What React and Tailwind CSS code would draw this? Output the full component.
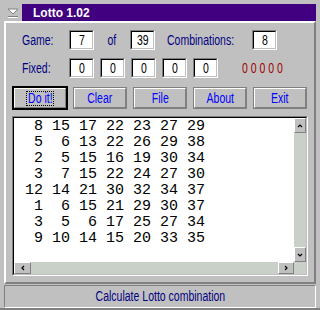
import React from "react";

const lines = [
  " 8 15 17 22 23 27 29",
  " 5  6 13 22 26 29 38",
  " 2  5 15 16 19 30 34",
  " 3  7 15 22 24 27 30",
  "12 14 21 30 32 34 37",
  " 1  6 15 21 29 30 37",
  " 3  5  6 17 25 27 34",
  " 9 10 14 15 20 33 35",
];

function T({ children, center }) {
  return (
    <span
      className={`inline-block whitespace-nowrap scale-x-75 ${center ? "origin-center" : "origin-left"}`}
    >
      {children}
    </span>
  );
}

function Field({ children }) {
  return (
    <div className="w-[25px] h-[20px] border border-t-[#808080] border-l-[#808080] border-b-white border-r-white">
      <div className="w-full h-full border border-t-black border-l-black border-b-[#c0c0c0] border-r-[#c0c0c0] bg-white flex items-center justify-center text-[14px] leading-none text-black">
        <T center>{children}</T>
      </div>
    </div>
  );
}

function Btn({ children }) {
  return (
    <div className="w-[54px] h-[22px] border border-[#808080]">
      <div className="w-full h-full border border-t-white border-l-white border-b-[#808080] border-r-[#808080] flex items-center justify-center text-[14px] leading-none text-[#0000ff]">
        <T center>{children}</T>
      </div>
    </div>
  );
}

function Chevron({ dir }) {
  const pts = {
    up: "1,4 3,2 5,4",
    down: "1,2 3,4 5,2",
    left: "4,1 2,3 4,5",
    right: "2,1 4,3 2,5",
  }[dir];
  return (
    <svg width="6" height="6" viewBox="0 0 6 6">
      <polyline points={pts} fill="none" stroke="#000" strokeWidth="1.2" />
    </svg>
  );
}

function SBtn({ dir, cls }) {
  return (
    <div className={`${cls} bg-[#c0c0c0] border border-t-white border-l-white border-b-[#808080] border-r-[#808080] flex items-center justify-center`}>
      <Chevron dir={dir} />
    </div>
  );
}

export default function App() {
  return (
    <div className="w-[320px] h-[310px] bg-[#c0c0c0] flex flex-col pt-[4px] font-['Liberation_Sans',sans-serif] border-b-2 border-[#808080]">
      {/* title bar */}
      <div className="h-[17px] flex ml-[4px] mr-[4px]">
        <div className="w-[18px] h-full flex items-center justify-center">
          <svg width="12" height="10" viewBox="0 0 12 10">
            <polygon points="1,1 11,1 6,6" fill="#ffffff" stroke="#808080" strokeWidth="1" />
            <line x1="1" y1="8.5" x2="11" y2="8.5" stroke="#808080" strokeWidth="1" />
            <line x1="1" y1="9.5" x2="11" y2="9.5" stroke="#ffffff" strokeWidth="1" />
          </svg>
        </div>
        <div className="flex-1 bg-[#400080] flex items-center pl-[11px] text-white font-bold text-[12px] leading-none">
          Lotto 1.02
        </div>
      </div>

      {/* body */}
      <div className="ml-[4px] w-[312px] h-[263px] border-2 border-t-white border-l-white border-b-[#808080] border-r-[#808080] flex flex-col">
        {/* row 1 */}
        <div className="mt-[7px] h-[20px] flex items-center text-[14px] text-[#000080]">
          <div className="ml-[16px] w-[47px]"><T>Game:</T></div>
          <Field>7</Field>
          <div className="w-[36px] text-center"><T center>of</T></div>
          <Field>39</Field>
          <div className="ml-[12px] w-[85px]"><T>Combinations:</T></div>
          <Field>8</Field>
        </div>
        {/* row 2 */}
        <div className="mt-[8px] h-[20px] flex items-center text-[14px] text-[#000080]">
          <div className="ml-[16px] w-[47px]"><T>Fixed:</T></div>
          <div className="flex gap-[6px]">
            <Field>0</Field>
            <Field>0</Field>
            <Field>0</Field>
            <Field>0</Field>
            <Field>0</Field>
          </div>
          <div className="ml-[24px] text-[#a00000] tracking-[3.9px]"><T>00000</T></div>
        </div>
        {/* buttons */}
        <div className="mt-[8px] h-[24px] flex items-center">
          <div className="ml-[6px] w-[56px] h-[24px] border-2 border-black">
            <div className="w-full h-full border border-t-white border-l-white border-b-[#808080] border-r-[#808080] flex items-center justify-center">
              <span className="w-[28px] h-[15px] border border-dotted border-black flex items-center justify-center text-[14px] leading-none text-[#0000ff]">
                <T center>Do it!</T>
              </span>
            </div>
          </div>
          <div className="ml-[5px] flex gap-[6px]">
            <Btn>Clear</Btn>
            <Btn>File</Btn>
            <Btn>About</Btn>
            <Btn>Exit</Btn>
          </div>
        </div>
        {/* text area */}
        <div className="mt-[6px] ml-[6px] w-[296px] h-[160px] border border-t-[#808080] border-l-[#808080] border-b-white border-r-white">
          <div className="w-full h-full border border-t-black border-l-black border-b-[#c0c0c0] border-r-[#c0c0c0] bg-white grid grid-cols-[1fr_12px] grid-rows-[1fr_12px]">
            <div className="overflow-hidden pt-[1px] pl-[11px] font-['Liberation_Mono',monospace] text-[15px] leading-[16px] text-black whitespace-pre">
              {lines.map((l, i) => (
                <div key={i}>{l}</div>
              ))}
            </div>
            <div className="bg-[#c8d0c8] flex flex-col justify-between">
              <SBtn dir="up" cls="w-[12px] h-[15px]" />
              <SBtn dir="down" cls="w-[12px] h-[15px]" />
            </div>
            <div className="bg-[#c8d0c8] flex justify-between items-stretch">
              <SBtn dir="left" cls="w-[17px] h-[12px]" />
              <SBtn dir="right" cls="w-[16px] h-[12px]" />
            </div>
            <div className="bg-[#c8d0c8]" />
          </div>
        </div>
      </div>

      {/* status bar */}
      <div className="mt-[1px] ml-[4px] w-[312px] h-[23px] border border-t-[#808080] border-l-[#808080] border-b-white border-r-white flex items-center justify-center text-[14px] text-[#000080]">
        <T center>Calculate Lotto combination</T>
      </div>
    </div>
  );
}
